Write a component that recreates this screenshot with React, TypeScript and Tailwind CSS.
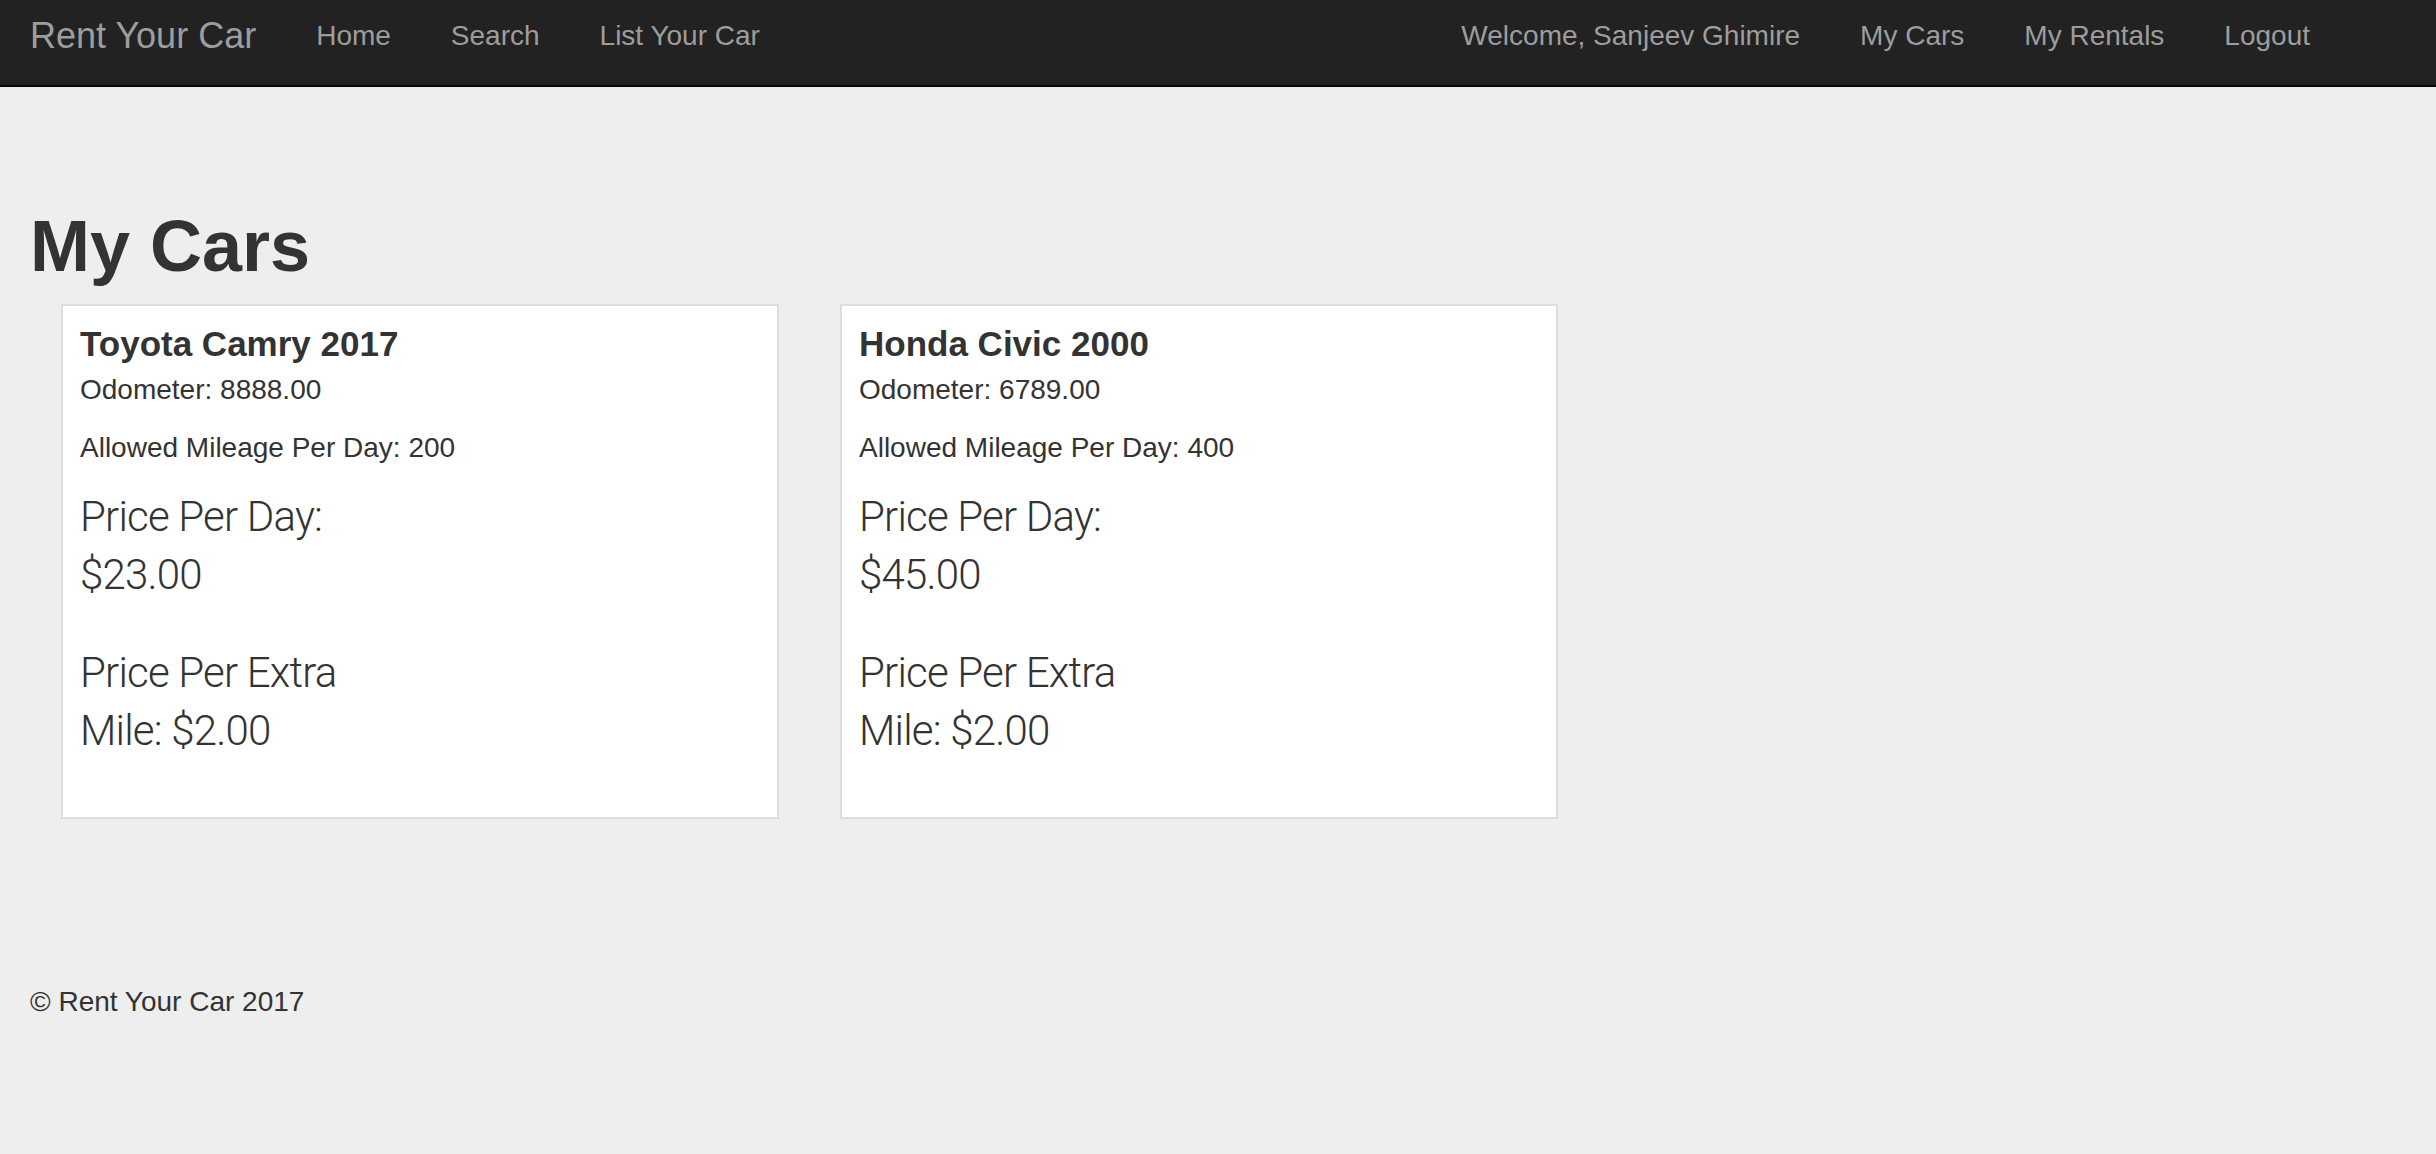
import React from 'react';

interface Car {
    name: string;
    odometer: string;
    mileage: number;
    pricePerDay: string;
    pricePerMile: string;
}

const cars: Car[] = [
    { name: 'Toyota Camry 2017', odometer: '8888.00', mileage: 200, pricePerDay: '$23.00', pricePerMile: '$2.00' },
    { name: 'Honda Civic 2000', odometer: '6789.00', mileage: 400, pricePerDay: '$45.00', pricePerMile: '$2.00' },
];

const sans = "font-['Liberation_Sans',Arial,sans-serif]";

function Navbar() {
    return (
        <nav className="h-[87px] bg-[#222] border-b-2 border-[#080808] flex justify-between pl-[30px] pr-[96px] pt-[16px]">
            <div className="flex items-start">
                <a className="text-[36px] leading-[40px] text-[#9d9d9d] pr-[30px]">Rent Your Car</a>
                {['Home', 'Search', 'List Your Car'].map(item => (
                    <a key={item} className="text-[28px] leading-[40px] text-[#9d9d9d] px-[30px]">{item}</a>
                ))}
            </div>
            <div className="flex items-start">
                {['Welcome, Sanjeev Ghimire', 'My Cars', 'My Rentals', 'Logout'].map(item => (
                    <a key={item} className="text-[28px] leading-[40px] text-[#9d9d9d] px-[30px]">{item}</a>
                ))}
            </div>
        </nav>
    );
}

function CarCard({ car }: { car: Car }) {
    return (
        <div className="w-[718px] bg-white border-2 border-[#ddd] px-[17px] pt-[18px] pb-[57px]">
            <h3 className="text-[35px] leading-[40px] font-bold">{car.name}</h3>
            <p className="text-[28px] leading-[40px] mt-[6px]">Odometer: {car.odometer}</p>
            <p className="text-[28px] leading-[40px] mt-[18px]">Allowed Mileage Per Day: {car.mileage}</p>
            <div className="w-[300px] font-['Roboto',sans-serif] font-light text-[42px] leading-[58px] tracking-[-0.8px]">
                <p className="mt-[20px]">Price Per Day: {car.pricePerDay}</p>
                <p className="mt-[40px]">Price Per Extra Mile: {car.pricePerMile}</p>
            </div>
        </div>
    );
}

export default function App() {
    return (
        <div className={`${sans} min-h-[1154px] bg-[#eee] text-[#333]`}>
            <Navbar />
            <main className="px-[30px]">
                <h1 className="text-[72px] leading-[80px] font-bold mt-[119px]">My Cars</h1>
                <div className="flex gap-[61px] pl-[31px] mt-[18px]">
                    {cars.map(car => (
                        <CarCard key={car.name} car={car} />
                    ))}
                </div>
                <footer className="mt-[163px]">
                    <p className="text-[28px] leading-[40px]">© Rent Your Car 2017</p>
                </footer>
            </main>
        </div>
    );
}
